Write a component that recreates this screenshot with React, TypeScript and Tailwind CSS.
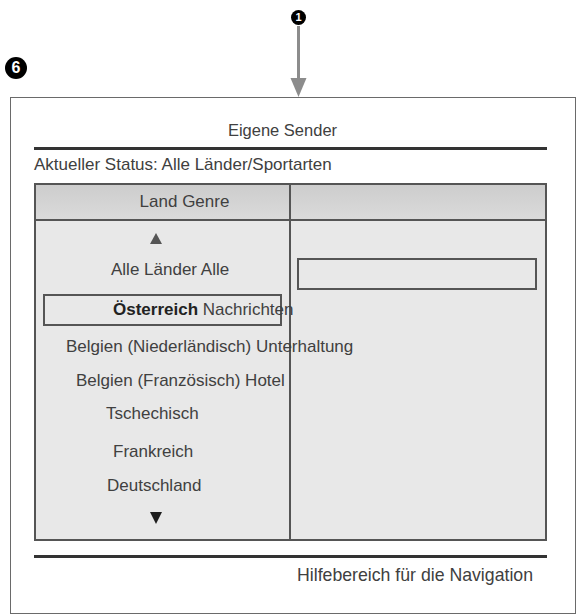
import React from 'react';

const rows = [
    { text: 'Alle Länder Alle', mt: 'mt-[12px]', pl: 'pl-[75px]' },
];

const lower = [
    { text: 'Belgien (Niederländisch) Unterhaltung', mt: 'mt-[11px]', pl: 'pl-[30px]' },
    { text: 'Belgien (Französisch) Hotel', mt: 'mt-[14px]', pl: 'pl-[40px]' },
    { text: 'Tschechisch', mt: 'mt-[13px]', pl: 'pl-[70px]' },
    { text: 'Frankreich', mt: 'mt-[18px]', pl: 'pl-[77px]' },
    { text: 'Deutschland', mt: 'mt-[14px]', pl: 'pl-[71px]' },
];

const App: React.FC = () => {
    return (
        <div className="relative w-[579px] h-[615px] bg-white text-[#404040] font-['Liberation_Sans',Arial,sans-serif] overflow-hidden">
            {/* Callout 1 with arrow */}
            <div className="absolute left-[291px] top-[10px] w-[15px] h-[15px] rounded-full bg-black flex items-center justify-center text-white text-[11px] font-bold leading-none">
                1
            </div>
            <svg className="absolute left-[289px] top-[26px]" width="20" height="72" viewBox="0 0 20 72">
                <rect x="8" y="0" width="3" height="56" fill="#8c8c8c" />
                <polygon points="1.5,52 17.5,52 9.5,71" fill="#8c8c8c" />
            </svg>
            {/* Callout 6 */}
            <div className="absolute left-[5px] top-[57px] w-[22px] h-[22px] rounded-full bg-black flex items-center justify-center text-white text-[16px] font-bold leading-none">
                6
            </div>

            <div className="ml-[10px] mt-[97px] w-[566px] h-[517px] border border-[#6a6a6a] pl-[23px]">
                <div className="w-[513px]">
                    <div className="pt-[22px] h-[42px] leading-[20px] text-[16.5px] text-center pr-[16px]">Eigene Sender</div>
                    <div className="mt-[7px] h-[3px] bg-[#333]" />
                    <div className="mt-[5px] leading-[20px] text-[17px]">Aktueller Status: Alle Länder/Sportarten</div>

                    <div className="mt-[8px] border-2 border-[#555] flex flex-col">
                        <div className="flex h-[36px] bg-gradient-to-b from-[#cdcdcd] to-[#dadada] border-b-2 border-[#555]">
                            <div className="w-[255px] border-r-2 border-[#555] flex items-center justify-center pl-[44px] text-[17px]">
                                Land Genre
                            </div>
                            <div className="flex-1" />
                        </div>
                        <div className="flex h-[318px] bg-[#e8e8e8]">
                            <div className="w-[255px] border-r-2 border-[#555] flex flex-col text-[17px] leading-[20px] whitespace-nowrap">
                                <div className="mt-[7px] h-[20px] flex items-center pl-[114px]">
                                    <svg width="12" height="11" viewBox="0 0 12 11"><polygon points="6,0 12,11 0,11" fill="#555" /></svg>
                                </div>
                                {rows.map((r) => (
                                    <div key={r.text} className={`${r.mt} ${r.pl} h-[20px]`}>{r.text}</div>
                                ))}
                                <div className="mt-[14px] ml-[7px] w-[239px] h-[32px] border-2 border-[#555] pl-[68px] flex items-center">
                                    <span className="font-bold text-[#222]">Österreich</span>
                                    <span>&nbsp;Nachrichten</span>
                                </div>
                                {lower.map((r) => (
                                    <div key={r.text} className={`${r.mt} ${r.pl} h-[20px] relative z-10`}>{r.text}</div>
                                ))}
                                <div className="mt-[12px] h-[20px] flex items-center pl-[114px]">
                                    <svg width="12" height="12" viewBox="0 0 12 12"><polygon points="0,0 12,0 6,12" fill="#1e1e1e" /></svg>
                                </div>
                            </div>
                            <div className="flex-1">
                                <div className="mt-[37px] ml-[6px] w-[240px] h-[32px] border-2 border-[#555]" />
                            </div>
                        </div>
                    </div>

                    <div className="mt-[14px] h-[3px] bg-[#333]" />
                    <div className="mt-[7px] leading-[20px] text-[17.7px] text-right pr-[14px]">Hilfebereich für die Navigation</div>
                </div>
            </div>
        </div>
    );
};

export default App;
